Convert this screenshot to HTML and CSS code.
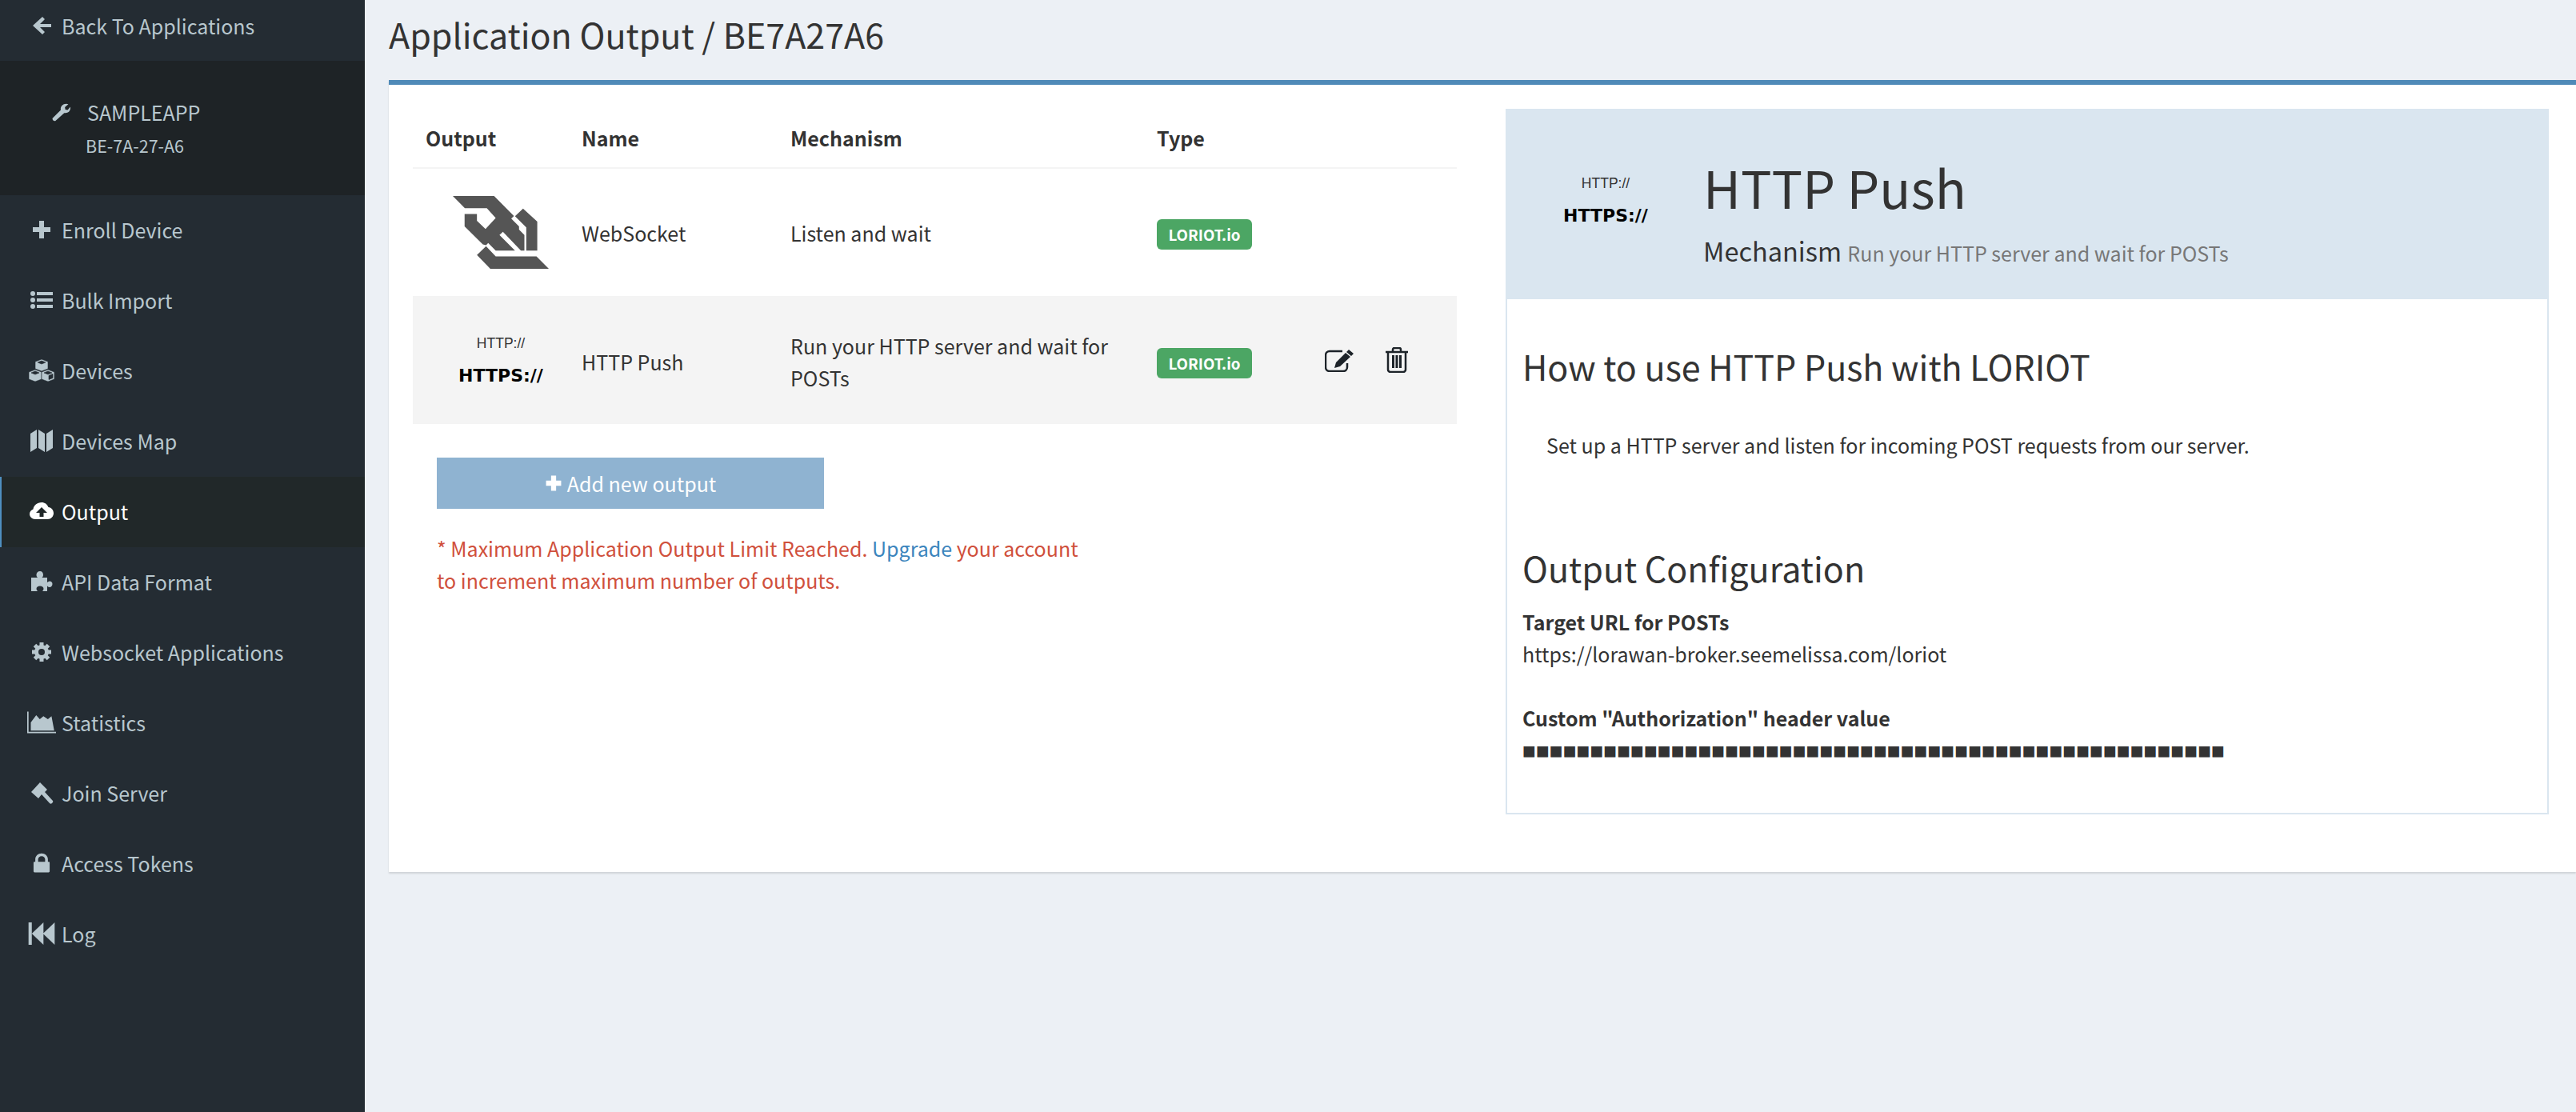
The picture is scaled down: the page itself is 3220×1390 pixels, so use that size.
FILE: index.html
```html
<!DOCTYPE html>
<html lang="en">
<head>
    <meta charset="UTF-8">
    <title>Application Output</title>
    <link rel="stylesheet" href="styles.css">
</head>
<body>
    <aside class="sidebar">
        <a class="back-link"><svg class="icon" viewBox="0 0 28 28"><path d="M15 3 3 14l12 11 3-3-6-6h14v-4H12l6-6z"/></svg>Back To Applications</a>
        <div class="app-box">
            <div class="app-name"><svg class="icon-small" viewBox="0 0 28 28"><path d="M2 23 14 11c-1-4 2-9 8-9l3 .6-5 4.400.6 3.400 3.400.6 4-4.600c.6 6-3 10-9 9L6 27c-2 1-5-2-4-4z"/></svg>SAMPLEAPP</div>
            <div class="app-id">BE-7A-27-A6</div>
        </div>
        <nav>
            <a class="nav-item"><svg class="icon" viewBox="0 0 28 28"><path d="M11 3h6v8h8v6h-8v8h-6v-8H3v-6h8z"/></svg>Enroll Device</a>
            <a class="nav-item"><svg class="icon" viewBox="0 0 28 28"><circle cx="3" cy="6" r="3"/><circle cx="3" cy="14" r="3"/><circle cx="3" cy="22" r="3"/><path d="M8 4h20v4H8zM8 12h20v4H8zM8 20h20v4H8z"/></svg>Bulk Import</a>
            <a class="nav-item"><svg class="icon" viewBox="0 0 34 28"><path class="cube" fill-rule="evenodd" d="M17 0l8 3v9l-8 3-8-3V3zm0 2-5 2 5 2 5-2z"/><path class="cube" fill-rule="evenodd" d="M9 13l8 3v9l-8 3-8-3v-9zm0 2-5 2 5 2 5-2z"/><path class="cube" fill-rule="evenodd" d="M25 13l8 3v9l-8 3-8-3v-9zm0 2-5 2 5 2 5-2zm1 5.500v5l5-2v-5z"/></svg>Devices</a>
            <a class="nav-item"><svg class="icon" viewBox="0 0 28 28"><path d="M0 5 8 0v23l-8 5zM10 0l8 5v23l-8-5zM20 5l8-5v23l-8 5z"/></svg>Devices Map</a>
            <a class="nav-item active"><svg class="icon" viewBox="0 0 30 28"><path fill-rule="evenodd" d="M7 24C3 24 0 21 0 17.500 0 14.500 2 12.500 4.500 11.500 5 7 9.500 3 15 3c4 0 7 2.300 8.500 6 3.800.5 6.500 3.500 6.500 7.500 0 4-3.300 7.500-7.500 7.500zm8-15-7 7h4.500v5h5v-5H22z"/></svg>Output</a>
            <a class="nav-item"><svg class="icon" viewBox="0 0 28 28"><path d="M1 9h8c-1-1-1.500-2-1.500-3.500C7.500 3 9.500 1 12 1s4 2 4 4.500c0 1.500-.5 2.500-1.500 3.500H21v6c1-1 2-1.500 3-1.500 2 0 3.500 1.500 3.500 3.500S26 21 24 21c-1 0-2-.5-3-1.500V26h-6c1-1 1.500-2 1.500-3 0-2-2-3.500-4.500-3.500S7.500 21 7.500 23c0 1 .5 2 1.500 3H1z"/></svg>API Data Format</a>
            <a class="nav-item"><svg class="icon" viewBox="0 0 28 28"><g class="gear"><path d="M11.500 2h5v24h-5z"/><path d="M11.500 2h5v24h-5z" transform="rotate(45 14 14)"/><path d="M11.500 2h5v24h-5z" transform="rotate(90 14 14)"/><path d="M11.500 2h5v24h-5z" transform="rotate(135 14 14)"/><circle cx="14" cy="14" r="9"/></g><circle class="hole" cx="14" cy="14" r="4"/></svg>Websocket Applications</a>
            <a class="nav-item"><svg class="icon" viewBox="0 0 32 24"><path d="M0 0h1.500v22.500H32V24H0zM4 21V12l6-8 4 4.500L18 5l5 3.500L27 5l3 16z"/></svg>Statistics</a>
            <a class="nav-item"><svg class="icon" viewBox="0 0 28 28"><path d="M1 13 12 1l9 9-3 3 10 11c.5 1 .5 1.500-1 3-1 1-2 1-3 0L14 16l-4 5z"/></svg>Join Server</a>
            <a class="nav-item"><svg class="icon" viewBox="-2 -2 32 32"><path fill-rule="evenodd" d="M5 12V8.500C5 3.500 9 0 14 0s9 3.500 9 8.500V12h1c1 0 1.500.6 1.500 1.500v12c0 1-.5 1.500-1.500 1.500H4c-1 0-1.500-.5-1.500-1.500v-12C2.500 12.600 3 12 4 12zm4 0h10V8.500C19 6 17 4 14 4S9 6 9 8.500z"/></svg>Access Tokens</a>
            <a class="nav-item"><svg class="icon" viewBox="0 0 28 24"><path d="M0 0h3.500v24H0zM16 0v24L3.500 12zM28 0v24L15.500 12z"/></svg>Log</a>
        </nav>
    </aside>

    <main class="content">
        <h1 class="page-title">Application Output / BE7A27A6</h1>
        <div class="box">
            <section class="outputs">
                <table class="output-table">
                    <thead>
                        <tr><th class="col-output">Output</th><th class="col-name">Name</th><th class="col-mech">Mechanism</th><th class="col-type">Type</th><th></th></tr>
                    </thead>
                    <tbody>
                        <tr>
                            <td>
                                <svg class="ws-logo" viewBox="198 345 358 271"><path d="M198 345H352L426 419 416 429 445 458V470L465 490V548H452L385 478 372 490 430 548H358L330 520 322 528 310 525 242 458V412H288V437L320 468 358 427 325 390H243z"/><path d="m430 420 30-28 53 48v108h-41v-86zM322 532l36 38h152l46 46H338l-50-51z"/></svg>
                            </td>
                            <td>WebSocket</td>
                            <td>Listen and wait</td>
                            <td><span class="badge">LORIOT.io</span></td>
                            <td></td>
                        </tr>
                        <tr class="selected">
                            <td><div class="http-logo"><span class="http">HTTP://</span><span class="https">HTTPS://</span></div></td>
                            <td class="lowered">HTTP Push</td>
                            <td class="lowered">Run your HTTP server and wait for POSTs</td>
                            <td class="lowered"><span class="badge">LORIOT.io</span></td>
                            <td>
                                <div class="actions">
                                    <svg class="edit-icon" viewBox="0 0 36 28"><path class="line" d="M22 2H6a5 5 0 0 0-5 5v15a5 5 0 0 0 5 5h17a5 5 0 0 0 5-5v-5"/><path d="m30 0 6 5-3 3-6-5zM26 4l6 5-13 12-7 2 2-7z"/></svg>
                                    <svg class="trash-icon" viewBox="0 0 28 32"><path class="line" d="M0 6h28M3 6v22a3 3 0 0 0 3 3h16a3 3 0 0 0 3-3V6M9 6V3a2 2 0 0 1 2-2h6a2 2 0 0 1 2 2v3"/><path d="M8 10h3v16H8zM12.500 10h3v16h-3zM17 10h3v16h-3z"/></svg>
                                </div>
                            </td>
                        </tr>
                    </tbody>
                </table>
                <button class="add-btn"><svg class="plus" viewBox="0 0 28 28"><path d="M10 2h8v8h8v8h-8v8h-8v-8H2v-8h8z"/></svg>Add new output</button>
                <p class="limit-note">* Maximum Application Output Limit Reached. <a>Upgrade</a> your account to increment maximum number of outputs.</p>
            </section>

            <section class="details">
                <div class="details-head">
                    <div class="http-logo"><span class="http">HTTP://</span><span class="https">HTTPS://</span></div>
                    <div class="details-title">
                        <h2>HTTP Push</h2>
                        <h3>Mechanism <small>Run your HTTP server and wait for POSTs</small></h3>
                    </div>
                </div>
                <div class="details-body">
                    <h4>How to use HTTP Push with LORIOT</h4>
                    <p class="usage">Set up a HTTP server and listen for incoming POST requests from our server.</p>
                    <h4 class="config-title">Output Configuration</h4>
                    <dl>
                        <dt>Target URL for POSTs</dt>
                        <dd>https://lorawan-broker.seemelissa.com/loriot</dd>
                        <dt>Custom "Authorization" header value</dt>
                        <dd class="secret">■■■■■■■■■■■■■■■■■■■■■■■■■■■■■■■■■■■■■■■■■■■■■■■■■■■■</dd>
                    </dl>
                </div>
            </section>
        </div>
    </main>
</body>
</html>
```

FILE: styles.css
```css
* { box-sizing: border-box; }
html, body { height: 100%; }
body { margin: 0; display: flex; background: #ecf0f5; color: #333; font: 25px/40px "Noto Sans CJK JP", "Open Sans", sans-serif; overflow: hidden; }
svg { fill: currentColor; flex: none; }

/* sidebar */
.sidebar { width: 456px; flex: none; background: #242c33; color: #b8c7ce; }
.back-link { display: flex; align-items: center; height: 76px; padding: 0 0 13px 34px; }
.icon { width: 36px; height: 28px; margin-right: 7px; }
.cube { stroke: #242c33; stroke-width: .6; }
.hole { fill: #242c33; }
.app-box { height: 168px; background: #1e2326; padding-top: 44px; }
.app-name { display: flex; align-items: center; padding-left: 64px; height: 40px; }
.icon-small { width: 24px; height: 24px; margin-right: 21px; }
.app-id { font-size: 21.500px; line-height: 34px; margin: 5px 0 0 107px; }
.nav-item { display: flex; align-items: center; height: 88px; padding: 0 0 2px 34px; }
.nav-item.active { background: #212829; color: #fff; box-shadow: inset 2px 0 #4f8fc0; }

/* main area */
.content { flex: 1; min-width: 0; padding-left: 30px; }
.page-title { margin: 0; font-size: 43px; line-height: 84px; height: 100px; font-weight: 400; }
.box { display: flex; height: 990px; background: #fff; border-top: 6px solid #4f8ab8; box-shadow: 0 2px 2px rgba(0,0,0,.12); }

/* outputs table */
.outputs { width: 1366px; flex: none; padding: 25px 0 0 30px; }
.output-table { width: 1305px; border-collapse: collapse; table-layout: fixed; }
.output-table th { height: 79px; padding: 4px 16px 0; text-align: left; border-bottom: 2px solid #f4f4f4; }
.output-table td { height: 160px; padding: 0 16px; vertical-align: middle; }
.output-table td.lowered { padding-top: 3px; }
.col-output { width: 195px; }
.col-name { width: 261px; }
.col-mech { width: 458px; }
.col-type { width: 218px; }
.selected td { background: #f4f4f4; }
.ws-logo { display: block; width: 120px; height: 91px; margin-left: 34px; fill: #555; }
.http-logo { display: flex; flex-direction: column; align-items: center; width: 112px; margin-left: 38px; }
.http { font: 17.500px/20px "Liberation Sans", sans-serif; color: #333; }
.https { font: bold 22px/22px "DejaVu Sans", sans-serif; color: #000; margin-top: 20px; }
.badge { display: inline-block; height: 38px; width: 119px; background: #4ca664; color: #fff; border-radius: 6px; font-size: 18.750px; font-weight: 700; line-height: 38px; text-align: center; vertical-align: middle; }
.actions { display: flex; gap: 40px; margin-left: -8px; }
.actions svg { fill: #1d2329; }
.actions .line { fill: none; stroke: #1d2329; stroke-width: 2.500; }
.edit-icon { width: 36px; height: 28px; margin-top: 3px; }
.trash-icon { width: 28px; height: 32px; }
.add-btn { display: flex; align-items: center; justify-content: center; width: 484px; height: 64px; margin: 42px 0 0 30px; border: 0; background: #8fb3d1; color: #fff; font: inherit; }
.plus { width: 22px; height: 22px; margin-right: 6px; }
.limit-note { width: 815px; margin: 29px 0 0 30px; color: #d0503c; }
.limit-note a { color: #3c85bd; }

/* detail panel */
.details { width: 1304px; flex: none; margin: 30px 0 0 30px; height: 882px; border: 2px solid #dae6f0; }
.details-head { display: flex; align-items: center; height: 236px; background: #dae6f0; padding-left: 67px; }
.details-head .http-logo { margin: -12px 0 0 0; }
.details-title { margin-left: 66px; padding-top: 16px; }
.details-title h2 { margin: 0; font-size: 64.500px; line-height: 90px; font-weight: 400; }
.details-title h3 { margin: 10px 0 0; font-size: 32.500px; line-height: 50px; font-weight: 400; }
.details-title small { font-size: 25px; color: #777; }
.details-body { padding: 0 19px; }
.details-body h4 { margin: 55px 0 0; font-size: 43px; line-height: 56px; font-weight: 400; }
.usage { margin: 51px 0 0 30px; }
.details-body .config-title { margin-top: 105px; }
dl { margin: 20px 0 0; }
dt { font-weight: 700; }
dd { margin: 0 0 40px; }
.secret { font: 28px/40px "Liberation Mono", monospace; letter-spacing: .08px; margin: 4px 0 0; }
```
